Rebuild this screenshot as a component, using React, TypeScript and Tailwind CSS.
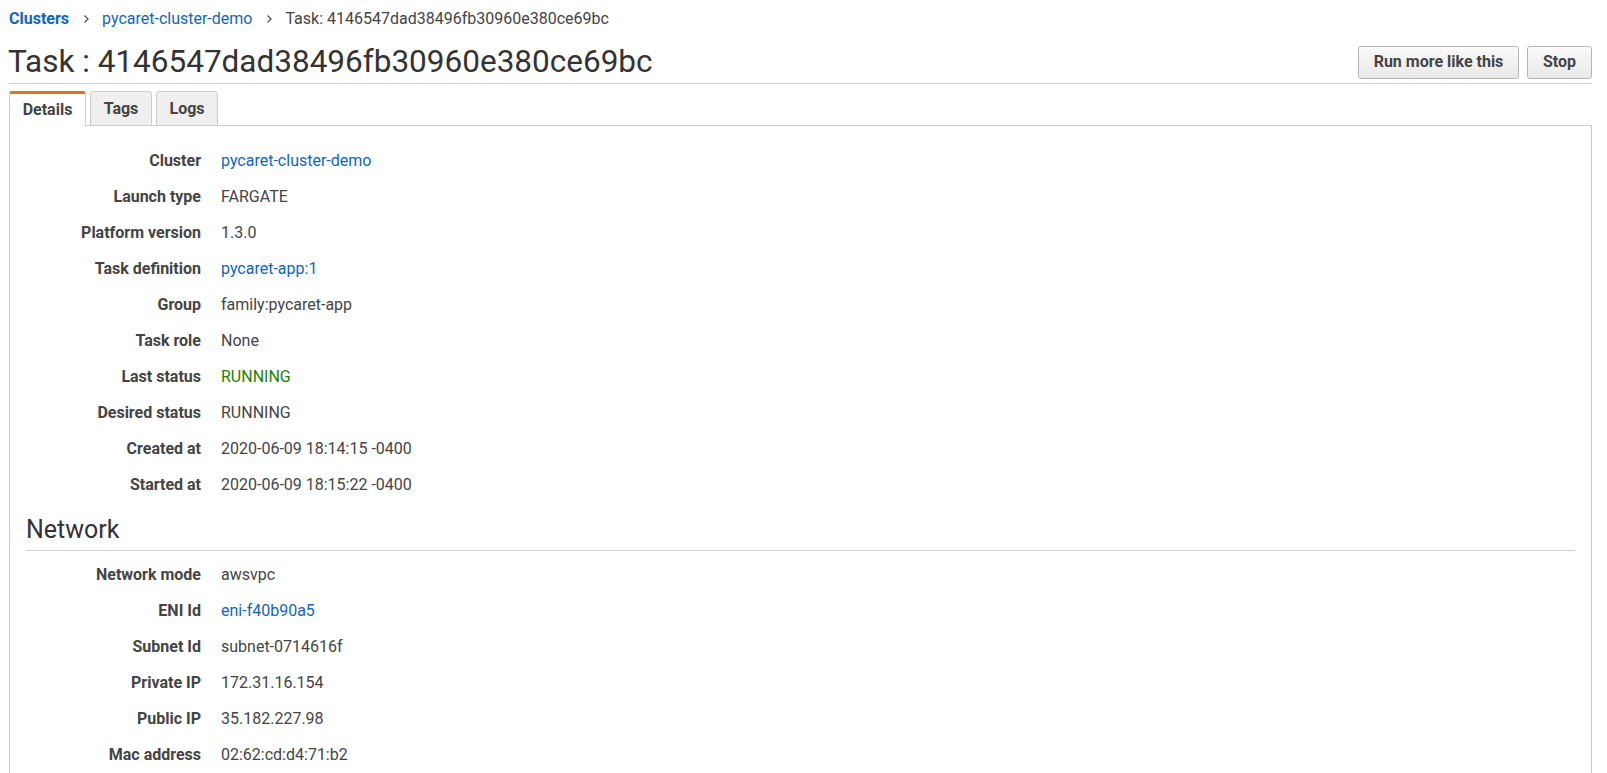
import React from 'react';

type Row = { label: string; value: string; kind?: 'link' | 'ok' };

const details: Row[] = [
  { label: 'Cluster', value: 'pycaret-cluster-demo', kind: 'link' },
  { label: 'Launch type', value: 'FARGATE' },
  { label: 'Platform version', value: '1.3.0' },
  { label: 'Task definition', value: 'pycaret-app:1', kind: 'link' },
  { label: 'Group', value: 'family:pycaret-app' },
  { label: 'Task role', value: 'None' },
  { label: 'Last status', value: 'RUNNING', kind: 'ok' },
  { label: 'Desired status', value: 'RUNNING' },
  { label: 'Created at', value: '2020-06-09 18:14:15 -0400' },
  { label: 'Started at', value: '2020-06-09 18:15:22 -0400' },
];

const network: Row[] = [
  { label: 'Network mode', value: 'awsvpc' },
  { label: 'ENI Id', value: 'eni-f40b90a5', kind: 'link' },
  { label: 'Subnet Id', value: 'subnet-0714616f' },
  { label: 'Private IP', value: '172.31.16.154' },
  { label: 'Public IP', value: '35.182.227.98' },
  { label: 'Mac address', value: '02:62:cd:d4:71:b2' },
];

function Chevron() {
  return (
    <svg width="7" height="10" viewBox="0 0 7 10" className="ml-[14px] mr-[12px]">
      <path d="M1.5 1.5 L5 5 L1.5 8.5" fill="none" stroke="#555" strokeWidth="1.3" />
    </svg>
  );
}

function DetailRow({ row }: { row: Row }) {
  const color =
    row.kind === 'link' ? 'text-[#1166bb]' : row.kind === 'ok' ? 'text-[#1d8102]' : 'text-[#444]';
  return (
    <div className="flex h-9 items-center text-[16px] leading-5">
      <div className="w-[175px] text-right font-bold text-[#444]">{row.label}</div>
      <div className={`ml-5 ${color}`}>{row.value}</div>
    </div>
  );
}

export default function App() {
  const tabs = ['Details', 'Tags', 'Logs'];
  return (
    <div
      className="min-h-screen bg-white pl-[9px] pr-[15px] pt-[9px] text-[#444]"
      style={{ fontFamily: 'Roboto, "Liberation Sans", sans-serif' }}
    >
      {/* breadcrumb */}
      <div className="flex h-5 items-center text-[16px]">
        <span className="font-bold text-[#1166bb]">Clusters</span>
        <Chevron />
        <span className="text-[#1166bb]">pycaret-cluster-demo</span>
        <Chevron />
        <span className="text-[#444]">Task: 4146547dad38496fb30960e380ce69bc</span>
      </div>

      {/* header */}
      <div className="mt-[12px] flex h-[43px] items-center justify-between border-b border-[#ccc]">
        <h1 className="-ml-px text-[31.5px] leading-10 text-[#333]">Task : 4146547dad38496fb30960e380ce69bc</h1>
        <div className="flex gap-2">
          <button className="h-[33px] w-[161px] rounded-[3px] border border-[#b5b5b5] bg-gradient-to-b from-[#fafafa] to-[#e9e9e9] text-[16px] font-bold text-[#444]">
            Run more like this
          </button>
          <button className="h-[33px] w-[65px] rounded-[3px] border border-[#b5b5b5] bg-gradient-to-b from-[#fafafa] to-[#e9e9e9] text-[16px] font-bold text-[#444]">
            Stop
          </button>
        </div>
      </div>

      {/* tabs */}
      <div className="relative z-10 mt-[7px] flex gap-1 -mb-px">
        {tabs.map((t, i) =>
          i === 0 ? (
            <div
              key={t}
              className="flex h-[35px] w-[77px] items-center justify-center rounded-t-[3px] border-x border-t-[3px] border-x-[#ccc] border-t-[#ec7211] bg-white text-[16px] font-bold text-[#444]"
            >
              {t}
            </div>
          ) : (
            <div
              key={t}
              className="flex h-[35px] w-[62px] items-center justify-center rounded-t-[3px] border border-[#ccc] bg-[#efefef] text-[16px] font-bold text-[#444]"
            >
              {t}
            </div>
          )
        )}
      </div>

      {/* panel */}
      <div className="border border-[#ccc] px-4 pt-[17px] pb-4">
        {details.map((r) => (
          <DetailRow key={r.label} row={r} />
        ))}
        <h2 className="mt-[12px] border-b border-[#ccc] pb-[5px] text-[25px] leading-[30px] text-[#333]">Network</h2>
        <div className="pt-[6px]">
          {network.map((r) => (
            <DetailRow key={r.label} row={r} />
          ))}
        </div>
      </div>
    </div>
  );
}
